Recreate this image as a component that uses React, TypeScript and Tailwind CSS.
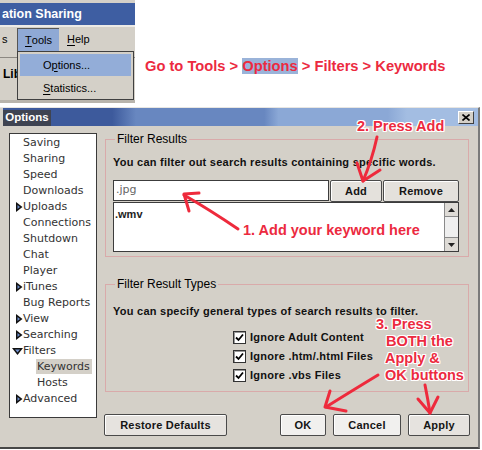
import React from 'react';

const outline =
  '[text-shadow:1px_0_0_#fff,-1px_0_0_#fff,0_1px_0_#fff,0_-1px_0_#fff,1px_1px_0_#fff,-1px_-1px_0_#fff,1px_-1px_0_#fff,-1px_1px_0_#fff]';

type TreeItem = { label: string; arrow?: 'right' | 'down'; child?: boolean; selected?: boolean };

const treeItems: TreeItem[] = [
  { label: 'Saving' },
  { label: 'Sharing' },
  { label: 'Speed' },
  { label: 'Downloads' },
  { label: 'Uploads', arrow: 'right' },
  { label: 'Connections' },
  { label: 'Shutdown' },
  { label: 'Chat' },
  { label: 'Player' },
  { label: 'iTunes', arrow: 'right' },
  { label: 'Bug Reports' },
  { label: 'View', arrow: 'right' },
  { label: 'Searching', arrow: 'right' },
  { label: 'Filters', arrow: 'down' },
  { label: 'Keywords', child: true, selected: true },
  { label: 'Hosts', child: true },
  { label: 'Advanced', arrow: 'right' },
];

const MenuShot = () => (
  <div className="relative w-[135px] h-[103px] bg-[#d4d0c8] border-b-[3px] border-[#b8b4ac] shrink-0">
    {/* title bar */}
    <div className="mt-[3px] h-[22px] bg-[#3e5ea2] flex items-center pl-[2px] text-white font-bold text-[12.5px]">
      ation Sharing
    </div>
    <div className="h-[2px] bg-[#eceae6]" />
    {/* menu bar */}
    <div className="h-[25px] flex items-center text-[11px] text-black">
      <span className="pl-[2px] w-[17px]">s</span>
      <span className="h-[24px] w-[42px] flex items-center justify-center bg-[#8fa9d5] border-l border-t border-[#555]">
        <span className="underline underline-offset-2">T</span>ools
      </span>
      <span className="ml-[8px]">
        <span className="underline underline-offset-2">H</span>elp
      </span>
    </div>
    <div className="h-[5px]" />
    <div className="h-[1px] bg-[#8c8882]" />
    <div className="pl-[3px] pt-[7px] text-[12px] font-bold text-black">Lib</div>

    {/* dropdown menu */}
    <div className="absolute left-[17px] top-[51px] w-[117px] h-[49px] bg-[#d4d0c8] border border-[#404040] p-[2px] text-[11px] text-black">
      <div className="h-[22px] bg-[#93add8] flex items-center pl-[23px]">
        O<span className="underline underline-offset-2">p</span>tions...
      </div>
      <div className="h-[22px] flex items-center pl-[23px] mt-[1px]">
        <span className="underline underline-offset-2">S</span>tatistics...
      </div>
    </div>
  </div>
);

const TreeArrow = ({ dir }: { dir: 'right' | 'down' }) =>
  dir === 'right' ? (
    <svg width="7" height="10" viewBox="0 0 7 10">
      <polygon points="0,0 6.5,5 0,10" fill="#111" />
      <polygon points="1.5,3 4,5 1.5,7" fill="#6f8fcc" />
    </svg>
  ) : (
    <svg width="11" height="7" viewBox="0 0 11 7">
      <polygon points="0,0 11,0 5.5,7" fill="#111" />
      <polygon points="3,1.5 8,1.5 5.5,4.5" fill="#6f8fcc" />
    </svg>
  );

const Tree = () => (
  <div className="w-[88px] h-[285px] bg-white border border-[#3a3a3a] pt-[1px] font-['DejaVu_Sans',sans-serif] text-[11px] text-[#333]">
    {treeItems.map((item) => (
      <div key={item.label} className="h-[16px] flex items-center">
        {item.child ? (
          <span className="pl-[26px]">
            <span className={item.selected ? 'bg-[#d4d0c8] px-[1px] py-[1px] pr-[2px]' : 'px-[1px]'}>{item.label}</span>
          </span>
        ) : (
          <>
            <span className="w-[13px] flex justify-end items-center">
              {item.arrow && <TreeArrow dir={item.arrow} />}
            </span>
            <span>{item.label}</span>
          </>
        )}
      </div>
    ))}
  </div>
);

const Btn = ({ children, className }: { children: React.ReactNode; className: string }) => (
  <div
    className={
      'h-[22px] flex items-center justify-center rounded-[2px] border border-[#4a4a4a] shadow-[inset_1px_1px_0_#fff] text-[11px] font-bold text-[#151515] tracking-[0.2px] ' +
      className
    }
  >
    {children}
  </div>
);

const Check = ({ label }: { label: string }) => (
  <div className="h-[19px] flex items-center ml-[120px]">
    <div className="w-[13px] h-[13px] bg-white border border-[#333] shadow-[inset_1px_1px_0_#999] flex items-center justify-center">
      <svg width="9" height="9" viewBox="0 0 9 9">
        <path d="M1 4.5 L3.5 7 L8 1.5" stroke="#000" strokeWidth="1.8" fill="none" />
      </svg>
    </div>
    <span className="ml-[4px] text-[11px] font-bold text-[#111] tracking-[0.25px]">{label}</span>
  </div>
);

const Dialog = () => (
  <div className="mt-[4px] w-[480px] h-[342px] bg-[#d4d0c8] border-t border-t-[#e8e6e2] border-r-2 border-r-[#7a7a7a] border-b-2 border-b-[#474747]">
    {/* title bar */}
    <div className="ml-[3px] h-[18px] flex items-center bg-[linear-gradient(to_right,#3d5a9c_0%,#3d5a9c_23%,#6887c0_28%,#6887c0_55%,#8ba8d6_58%,#8ba8d6_81%,#a3bde2_85%,#a3bde2_100%)]">
      <div className="w-[48px] h-[16px] mt-[2px] bg-[#3f4452] text-white font-bold text-[11.5px] flex items-center justify-center">
        Options
      </div>
      <div className="ml-auto mr-[4px] w-[16px] h-[13px] bg-[#d4d0c8] border border-t-white border-l-white border-r-[#404040] border-b-[#404040] flex items-center justify-center">
        <svg width="8" height="7" viewBox="0 0 8 7">
          <path d="M0.5 0.5 L7.5 6.5 M7.5 0.5 L0.5 6.5" stroke="#000" strokeWidth="1.6" />
        </svg>
      </div>
    </div>

    {/* body */}
    <div className="flex pl-[9px] pt-[7px]">
      <Tree />
      <div className="ml-[8px] w-[364px]">
        <fieldset className="border border-[#d9aaaa] px-[7px] pr-[9px] pb-[4px]">
          <legend className="ml-[2px] px-[2px] text-[12px] leading-[12px] text-black">Filter Results</legend>
          <div className="mt-[11px] text-[11px] leading-[13px] font-bold text-[#111] tracking-[0.25px]">
            You can filter out search results containing specific words.
          </div>
          <div className="mt-[11px] flex h-[21px]">
            <div className="w-[216px] h-[21px] bg-white border border-[#3c3c3c] flex items-center pl-[2px] font-['DejaVu_Sans',sans-serif] text-[11px] text-[#666]">
              .jpg
            </div>
            <Btn className="w-[52px] ml-[1px] bg-[#e4e1dc]">Add</Btn>
            <Btn className="w-[76px] ml-[1px] bg-[#e4e1dc]">Remove</Btn>
          </div>
          <div className="mt-[1px] h-[50px] w-[346px] bg-white border border-[#3c3c3c] flex">
            <div className="flex-1 pl-[1px] pt-[3px] text-[11px] font-bold text-[#222]">.wmv</div>
            <div className="w-[14px] border-l border-[#8a8a8a] bg-[#efefef] flex flex-col">
              <div className="h-[14px] bg-[#dedbd6] border-b border-[#8a8a8a] flex items-center justify-center">
                <svg width="7" height="4" viewBox="0 0 7 4"><polygon points="0,4 7,4 3.5,0" fill="#222" /></svg>
              </div>
              <div className="flex-1" />
              <div className="h-[14px] bg-[#dedbd6] border-t border-[#8a8a8a] flex items-center justify-center">
                <svg width="7" height="4" viewBox="0 0 7 4"><polygon points="0,0 7,0 3.5,4" fill="#222" /></svg>
              </div>
            </div>
          </div>
        </fieldset>

        <fieldset className="mt-[21px] border border-[#d9aaaa] px-[7px] pr-[9px] pb-[6px]">
          <legend className="ml-[2px] px-[2px] text-[12px] leading-[12px] text-black">Filter Result Types</legend>
          <div className="mt-[15px] text-[11px] leading-[13px] font-bold text-[#111] tracking-[0.25px]">
            You can specify general types of search results to filter.
          </div>
          <div className="mt-[10px]">
            <Check label="Ignore Adult Content" />
            <Check label="Ignore .htm/.html Files" />
            <Check label="Ignore .vbs Files" />
          </div>
        </fieldset>

        <div className="mt-[22px] -ml-[1px] w-[366px] flex">
          <Btn className="w-[123px] bg-[#e6e3df]">Restore Defaults</Btn>
          <Btn className="w-[46px] ml-auto bg-[#f1f0ee]">OK</Btn>
          <Btn className="w-[68px] ml-[7px] bg-[#f1f0ee]">Cancel</Btn>
          <Btn className="w-[62px] ml-[7px] bg-[#e6e3df]">Apply</Btn>
        </div>
      </div>
    </div>
  </div>
);

export default function App() {
  return (
    <div className="relative w-[482px] h-[450px] bg-white overflow-hidden font-['Liberation_Sans',Arial,sans-serif]">
      <div className="flex items-start">
        <MenuShot />
        <div className="ml-[10px] mt-[57px] text-[14.7px] leading-[18px] font-bold text-[#ec2a3f] whitespace-nowrap">
          Go to Tools &gt; <span className="bg-[#9ab3d9]">Options</span> &gt; Filters &gt; Keywords
        </div>
      </div>
      <Dialog />

      {/* red annotations drawn over the screenshot */}
      <div className={'absolute left-[357px] top-[117px] text-[14.5px] leading-[18px] font-bold text-[#ec2a3f] whitespace-nowrap ' + outline}>
        2. Press Add
      </div>
      <div className={'absolute left-[243px] top-[221px] text-[14.5px] leading-[18px] font-bold text-[#ec2a3f] whitespace-nowrap ' + outline}>
        1. Add your keyword here
      </div>
      <div className={'absolute left-[376px] top-[316px] text-[14.5px] leading-[17px] font-bold text-[#ec2a3f] whitespace-nowrap ' + outline}>
        <div>3. Press</div>
        <div className="pl-[10px]">BOTH the</div>
        <div className="pl-[9px]">Apply &amp;</div>
        <div className="pl-[9px]">OK buttons</div>
      </div>
      <svg className="absolute inset-0 pointer-events-none" width="482" height="450">
        <g stroke="#ee2a3c" strokeWidth="3" fill="none" strokeLinecap="round" strokeLinejoin="round">
          <path d="M377 137 Q372 160 363 181" />
          <path d="M357 163 L363 181 L380 170" />
          <path d="M238 229 Q210 210 184 195" />
          <path d="M199 193 L184 194 L189 211" />
          <path d="M378 375 Q350 392 326 407" />
          <path d="M330 391 L325 407 L346 411" />
          <path d="M425 385 Q428 400 430 413" />
          <path d="M418 399 L430 413 L438 397" />
        </g>
      </svg>
    </div>
  );
}
